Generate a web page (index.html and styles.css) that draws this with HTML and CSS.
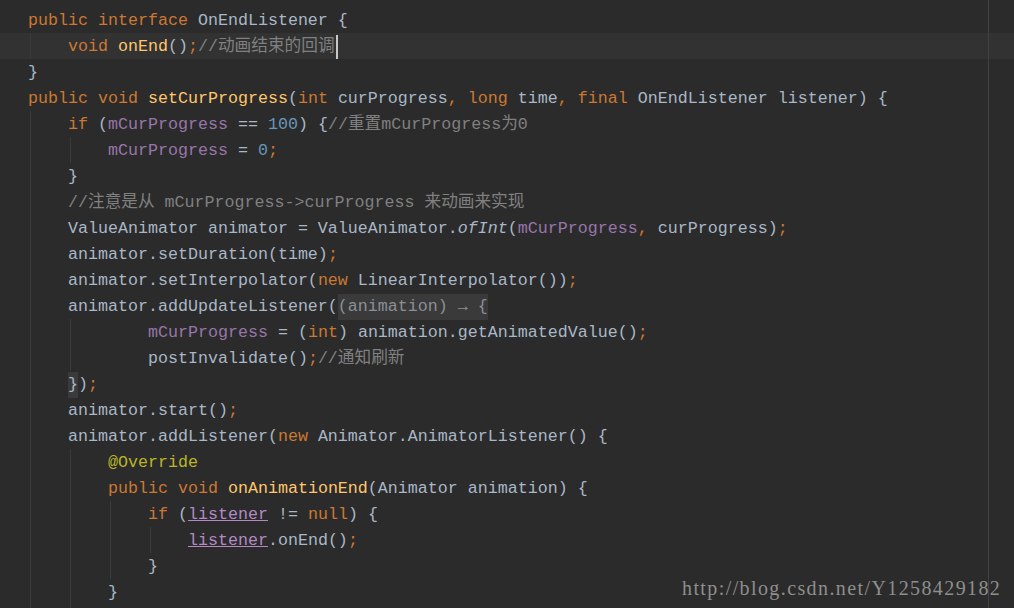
FILE: index.html
```html
<!DOCTYPE html>
<html lang="zh">
<head>
    <meta charset="UTF-8">
    <meta name="viewport" content="width=device-width, initial-scale=1.0">
    <title>setCurProgress</title>
    <link rel="stylesheet" href="styles.css">
</head>
<body>
    <div class="editor">
        <div class="ln"><span class="k">public interface </span>OnEndListener {</div>
        <div class="ln g1 cur">    <span class="k">void </span><span class="f">onEnd</span>()<span class="k">;</span><span class="c">//动画结束的回调</span><span class="caret"></span></div>
        <div class="ln">}</div>
        <div class="ln"><span class="k">public void </span><span class="f">setCurProgress</span>(<span class="k">int </span>curProgress<span class="k">, long </span>time<span class="k">, final </span>OnEndListener listener) {</div>
        <div class="ln g1">    <span class="k">if </span>(<span class="v">mCurProgress</span> == <span class="n">100</span>) {<span class="c">//重置mCurProgress为0</span></div>
        <div class="ln g2">        <span class="v">mCurProgress</span> = <span class="n">0</span><span class="k">;</span></div>
        <div class="ln g1">    }</div>
        <div class="ln g1">    <span class="c">//注意是从 mCurProgress-&gt;curProgress 来动画来实现</span></div>
        <div class="ln g1">    ValueAnimator animator = ValueAnimator.<span class="it">ofInt</span>(<span class="v">mCurProgress</span><span class="k">, </span>curProgress)<span class="k">;</span></div>
        <div class="ln g1">    animator.setDuration(time)<span class="k">;</span></div>
        <div class="ln g1">    animator.setInterpolator(<span class="k">new </span>LinearInterpolator())<span class="k">;</span></div>
        <div class="ln g1">    animator.addUpdateListener(<span class="fold">(animation) → {</span></div>
        <div class="ln g2">            <span class="v">mCurProgress</span> = (<span class="k">int</span>) animation.getAnimatedValue()<span class="k">;</span></div>
        <div class="ln g2">            postInvalidate()<span class="k">;</span><span class="c">//通知刷新</span></div>
        <div class="ln g1">    <span class="fold brace">}</span>)<span class="k">;</span></div>
        <div class="ln g1">    animator.start()<span class="k">;</span></div>
        <div class="ln g1">    animator.addListener(<span class="k">new </span>Animator.AnimatorListener() {</div>
        <div class="ln g2">        <span class="a">@Override</span></div>
        <div class="ln g2">        <span class="k">public void </span><span class="f">onAnimationEnd</span>(Animator animation) {</div>
        <div class="ln g3">            <span class="k">if </span>(<span class="p">listener</span> != <span class="k">null</span>) {</div>
        <div class="ln g4">                <span class="p">listener</span>.onEnd()<span class="k">;</span></div>
        <div class="ln g3">            }</div>
        <div class="ln g2">        }</div>
        <div class="ln g2"></div>
        <div class="watermark">http://blog.csdn.net/Y1258429182</div>
    </div>
</body>
</html>
```
FILE: styles.css
```css
body {
    margin: 0;
    background: #2b2b2b;
}
.editor {
    position: relative;
    width: 1014px;
    height: 608px;
    overflow: hidden;
    padding-top: 7px;
    box-sizing: border-box;
    background: #2b2b2b;
    color: #a9b7c6;
    font-family: "Liberation Mono", "DejaVu Sans Mono", "Noto Sans CJK SC", monospace;
    font-size: 16.67px;
}
/* right margin guide */
.editor::after {
    content: "";
    position: absolute;
    left: 988px;
    top: 0;
    bottom: 0;
    width: 1px;
    background: #424242;
}
.ln {
    height: 24px;
    padding-top: 2px;
    line-height: 24px;
    padding-left: 28px;
    white-space: pre;
    background-repeat: no-repeat;
    background-size: 1px 100%;
}
.cur {
    background-color: #323232;
}
/* indent guides */
.g1 {
    background-image: linear-gradient(#3a3a3a, #3a3a3a);
    background-position: 30px 0;
}
.g2 {
    background-image: linear-gradient(#3a3a3a, #3a3a3a), linear-gradient(#3a3a3a, #3a3a3a);
    background-position: 30px 0, 70px 0;
}
.g3 {
    background-image: linear-gradient(#3a3a3a, #3a3a3a), linear-gradient(#3a3a3a, #3a3a3a), linear-gradient(#3a3a3a, #3a3a3a);
    background-position: 30px 0, 70px 0, 110px 0;
}
.g4 {
    background-image: linear-gradient(#3a3a3a, #3a3a3a), linear-gradient(#3a3a3a, #3a3a3a), linear-gradient(#3a3a3a, #3a3a3a), linear-gradient(#3a3a3a, #3a3a3a);
    background-position: 30px 0, 70px 0, 110px 0, 150px 0;
}
.k { color: #cc7832; }
.f { color: #ffc66d; }
.v { color: #9876aa; }
.n { color: #6897bb; }
.c { color: #808080; }
.a { color: #bbb529; }
.it { font-style: italic; }
.p {
    color: #b389c5;
    text-decoration: underline;
}
.fold {
    display: inline-block;
    height: 26px;
    margin-top: -1px;
    vertical-align: top;
    line-height: 26px;
    background: #3a3a3a;
    color: #8a8f96;
}
.brace {
    color: #a9b7c6;
}
.caret {
    display: inline-block;
    width: 2px;
    height: 24px;
    margin-left: 1px;
    vertical-align: top;
    background: #c8c8c8;
}
.watermark {
    position: absolute;
    left: 682px;
    top: 577px;
    line-height: 22px;
    font-family: "Liberation Serif", serif;
    font-size: 20px;
    letter-spacing: 1.4px;
    color: #8e8e8e;
    white-space: nowrap;
}
```
